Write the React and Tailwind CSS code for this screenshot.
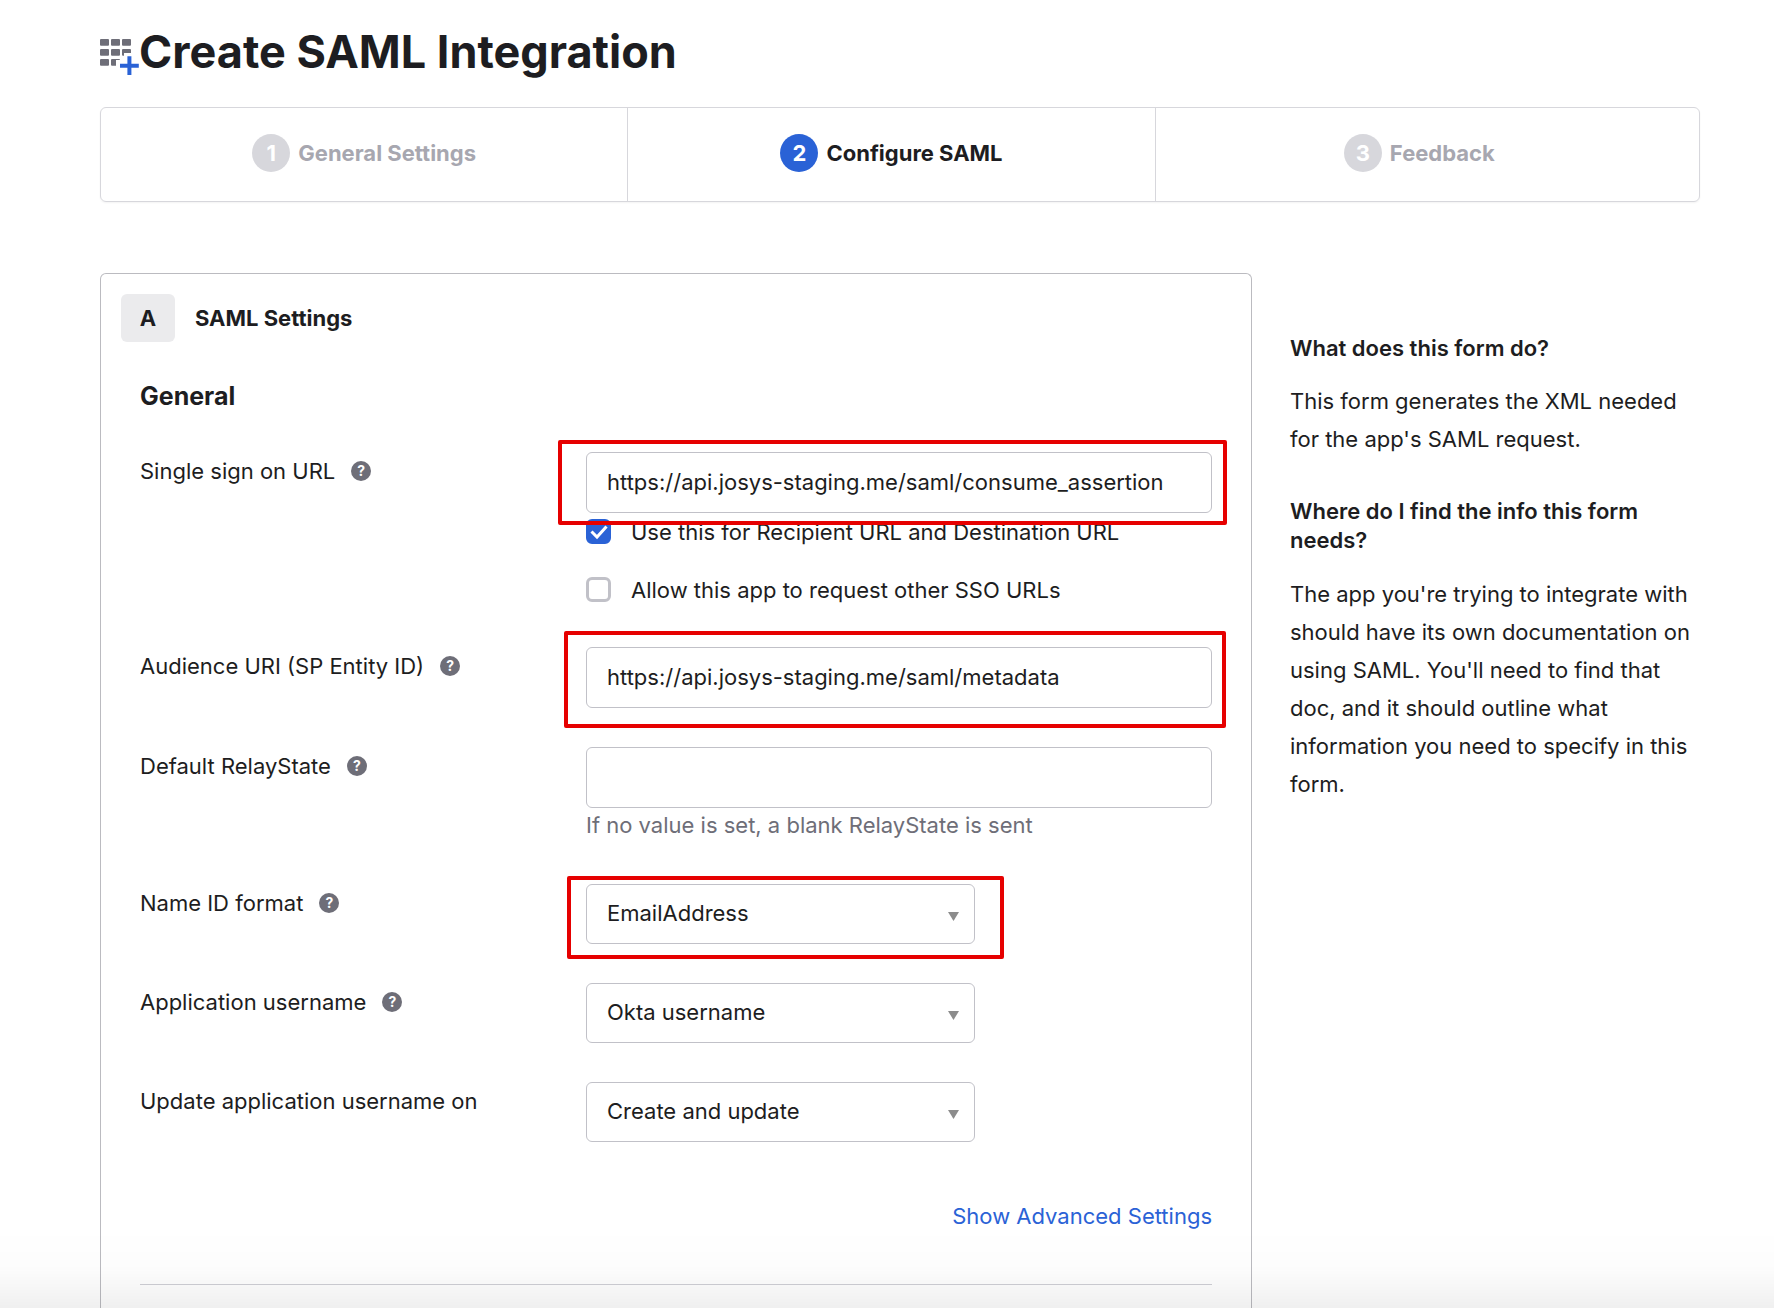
import React, { useState } from 'react'

const steps = [
  { number: 1, label: 'General Settings' },
  { number: 2, label: 'Configure SAML' },
  { number: 3, label: 'Feedback' },
]

const AddAppIcon = () => (
  <svg width="39" height="37" viewBox="0 0 39 37" aria-hidden="true" className="shrink-0">
    <g fill="#6e6e78">
      {[0, 10, 20].map((y) =>
        [0, 11, 22].map((x) =>
          x === 22 && y === 20 ? null : <rect key={`${x}-${y}`} x={x} y={y} width="9" height="6.8" rx="1" />
        )
      )}
    </g>
    <path d="M24 14h10v7h5v10H16v-10h8z" fill="#fff" />
    <path d="M29.4 17.3v18.7M20 26.7h18.8" stroke="#2a62d6" strokeWidth="4" fill="none" />
  </svg>
)

const HelpButton = ({ topic }) => (
  <button
    type="button"
    aria-label={`Help: ${topic}`}
    className="flex h-5 w-5 shrink-0 items-center justify-center rounded-full bg-[#6e6e78] text-[14px] leading-5 font-bold text-white"
  >
    ?
  </button>
)

const Row = ({ id, label, help, children }) => (
  <div className="flex items-start">
    <div className="flex w-[446px] shrink-0 items-center gap-4 pt-[5px]">
      <label htmlFor={id}>{label}</label>
      {help && <HelpButton topic={label} />}
    </div>
    <div className="min-w-0 flex-1">{children}</div>
  </div>
)

const TextField = ({ id, value, onChange }) => (
  <input
    id={id}
    name={id}
    type="text"
    value={value}
    onChange={onChange}
    className="block h-[61px] w-full rounded-md border border-[#c1c1c8] bg-white px-5 pb-0.5 focus:outline-none"
  />
)

const SelectField = ({ id, options }) => (
  <div className="relative w-[389px]">
    <select
      id={id}
      name={id}
      className="block h-15 w-full appearance-none rounded-md border border-[#c1c1c8] bg-white px-5 pb-0.5 focus:outline-none"
    >
      {options.map((option) => (
        <option key={option}>{option}</option>
      ))}
    </select>
    <svg width="11" height="9" viewBox="0 0 11 9" className="pointer-events-none absolute top-7 right-4" aria-hidden="true">
      <path d="M0 0h11L5.5 9z" fill="#8c8c8c" />
    </svg>
  </div>
)

const Checkbox = ({ id, label, checked, onChange }) => (
  <label htmlFor={id} className="flex h-[25px] items-center gap-5">
    <span className="relative h-[25px] w-[25px] shrink-0">
      <input
        id={id}
        type="checkbox"
        checked={checked}
        onChange={onChange}
        className="block h-full w-full appearance-none rounded-md border-3 border-[#c1c1c8] bg-white checked:border-[#2a62d6] checked:bg-[#2a62d6]"
      />
      {checked && (
        <svg viewBox="0 0 25 25" className="pointer-events-none absolute inset-0" fill="none" aria-hidden="true">
          <path d="M5.5 12.5l5.5 5.5L20.5 7.5" stroke="#fff" strokeWidth="3" />
        </svg>
      )}
    </span>
    {label}
  </label>
)

const App = () => {
  const [form, setForm] = useState({
    ssoUrl: 'https://api.josys-staging.me/saml/consume_assertion',
    audience: 'https://api.josys-staging.me/saml/metadata',
    relayState: '',
    useForRecipient: true,
    allowOther: false,
  })

  const handleText = (e) => setForm({ ...form, [e.target.name]: e.target.value })
  const handleCheck = (e) => setForm({ ...form, [e.target.id]: e.target.checked })

  return (
    <div className="flex min-h-screen flex-col bg-white pt-7 pr-[74px] pl-[100px] font-['Inter',sans-serif] text-[22px] leading-7 text-[#1d1d21]">
      <header className="flex items-center">
        <div className="pt-2.5">
          <AddAppIcon />
        </div>
        <h1 className="text-[45px] leading-[48px] font-bold">Create SAML Integration</h1>
      </header>

      <ol className="mt-[31px] flex h-[95px] shrink-0 rounded-md border border-[#d7d7dc] font-bold shadow-xs">
        {steps.map(({ number, label }) => (
          <li
            key={number}
            aria-current={number === 2 ? 'step' : undefined}
            className={
              'flex w-[33%] items-center justify-center gap-2 border-[#d7d7dc] pb-1 ' +
              (number === 2 ? 'text-[#1d1d21] ' : 'text-[#a7a7b0] ') +
              (number < 3 ? 'border-r' : '')
            }
          >
            <span
              className={
                'flex h-[38px] w-[38px] items-center justify-center rounded-full text-white ' +
                (number === 2 ? 'bg-[#2a62d6]' : 'bg-[#d7d7dc]')
              }
            >
              {number}
            </span>
            {label}
          </li>
        ))}
      </ol>

      <div className="mt-[71px] flex flex-1">
        <main className="flex w-[72%] shrink-0 flex-col rounded-t-md border border-b-0 border-[#bbbbc0] px-[39px] pt-5">
          <div className="-ml-[19px] flex items-center gap-5">
            <span className="flex h-12 w-[54px] items-center justify-center rounded-md bg-[#ebebed] font-bold">A</span>
            <h2 className="font-bold">SAML Settings</h2>
          </div>
          <h3 className="mt-10 text-[25px] leading-7 font-bold">General</h3>

          <form className="mt-[42px] flex flex-col gap-[39px]" onSubmit={(e) => e.preventDefault()}>
            <Row id="ssoUrl" label="Single sign on URL" help>
              <div className="relative">
                <TextField id="ssoUrl" value={form.ssoUrl} onChange={handleText} />
                <div className="pointer-events-none absolute -top-3 -right-[15px] -bottom-3 -left-7 z-10 rounded-xs border-4 border-[#e60000]" />
              </div>
              <div className="flex flex-col gap-[33px] py-1.5">
                <Checkbox
                  id="useForRecipient"
                  label="Use this for Recipient URL and Destination URL"
                  checked={form.useForRecipient}
                  onChange={handleCheck}
                />
                <Checkbox
                  id="allowOther"
                  label="Allow this app to request other SSO URLs"
                  checked={form.allowOther}
                  onChange={handleCheck}
                />
              </div>
            </Row>

            <Row id="audience" label="Audience URI (SP Entity ID)" help>
              <div className="relative">
                <TextField id="audience" value={form.audience} onChange={handleText} />
                <div className="pointer-events-none absolute -top-4 -right-3.5 -bottom-5 -left-[22px] z-10 rounded-xs border-4 border-[#e60000]" />
              </div>
            </Row>

            <Row id="relayState" label="Default RelayState" help>
              <TextField id="relayState" value={form.relayState} onChange={handleText} />
              <p className="pt-[3px] pb-1.5 text-[#6e6e78]">If no value is set, a blank RelayState is sent</p>
            </Row>

            <Row id="nameIdFormat" label="Name ID format" help>
              <div className="relative w-[389px]">
                <SelectField id="nameIdFormat" options={['EmailAddress', 'Unspecified', 'Persistent', 'Transient']} />
                <div className="pointer-events-none absolute -top-2 -right-[29px] -bottom-[15px] -left-[19px] z-10 rounded-xs border-4 border-[#e60000]" />
              </div>
            </Row>

            <Row id="appUsername" label="Application username" help>
              <SelectField id="appUsername" options={['Okta username', 'Email', 'Custom']} />
            </Row>

            <Row id="updateOn" label="Update application username on">
              <SelectField id="updateOn" options={['Create and update', 'Create only']} />
            </Row>
          </form>

          <a href="#advanced" className="mt-15 self-end text-[#2a62d6]">
            Show Advanced Settings
          </a>
          <hr className="mt-[54px] border-[#d0d0d6]" />
        </main>

        <aside className="flex-1 pt-[61px] pl-[38px]">
          <h2 className="font-semibold leading-[29px]">What does this form do?</h2>
          <p className="mt-[19px] leading-[38px]">This form generates the XML needed for the app's SAML request.</p>
          <h2 className="mt-[39px] font-semibold leading-[29px]">Where do I find the info this form needs?</h2>
          <p className="mt-5 leading-[38px]">
            The app you're trying to integrate with should have its own documentation on using SAML. You'll need to find that
            doc, and it should outline what information you need to specify in this form.
          </p>
        </aside>
      </div>

      <div className="pointer-events-none fixed inset-x-0 bottom-0 h-20 bg-linear-to-b from-transparent via-black/1 to-black/6" />
    </div>
  )
}

export default App
